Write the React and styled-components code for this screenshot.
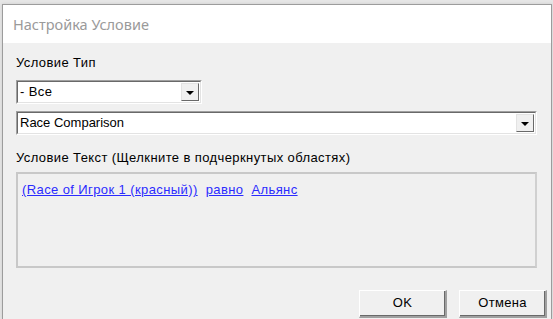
import React from "react";
import styled, { createGlobalStyle } from "styled-components";

const Global = createGlobalStyle`
  html, body { margin: 0; padding: 0; background: #e6e6e6; overflow: hidden; }
  body { width: 553px; height: 319px; font-family: "Liberation Sans", Arial, sans-serif; }
`;

const Page = styled.div`
  padding: 4px 1px 0 2px;
  height: 319px;
  box-sizing: border-box;
`;

const Window = styled.div`
  border: 1px solid #9c9c9c;
  border-bottom: none;
  height: 100%;
  box-sizing: border-box;
  display: flex;
  flex-direction: column;
  box-shadow: 0 0 3px rgba(0,0,0,0.12);
`;

const TitleBar = styled.div`
  height: 38px;
  background: #ffffff;
  display: flex;
  align-items: center;
  padding-left: 10px;
  font-family: "Noto Sans", "Open Sans", sans-serif;
  font-size: 14.5px;
  color: #9a9a9a;
`;

const Client = styled.div`
  flex: 1;
  background: #f0f0f0;
  padding: 12px 14px 0 13px;
  display: flex;
  flex-direction: column;
  font-size: 13px;
  color: #000;
`;

const Label = styled.div`
  height: 15px;
  line-height: 15px;
  letter-spacing: 0.4px;
  margin-bottom: ${(p) => p.$mb || 0}px;
`;

const Combo = styled.div`
  width: ${(p) => p.$w || "auto"};
  height: 24px;
  box-sizing: border-box;
  border-style: solid;
  border-width: 1px;
  border-color: #a0a0a0 #ffffff #ffffff #a0a0a0;
  margin-bottom: ${(p) => p.$mb || 0}px;
`;

const ComboInner = styled.div`
  height: 100%;
  box-sizing: border-box;
  border-style: solid;
  border-width: 1px;
  border-color: #696969 #e3e3e3 #e3e3e3 #696969;
  background: #fff;
  display: flex;
  align-items: center;
`;

const ComboText = styled.div`
  flex: 1;
  padding-left: 2px;
  line-height: 20px;
  white-space: nowrap;
  letter-spacing: ${(p) => p.$ls || 0}px;
`;

const DropButton = styled.div`
  width: 18px;
  height: 18px;
  margin-right: 1px;
  box-sizing: border-box;
  background: #f0f0f0;
  border-style: solid;
  border-width: 1px;
  border-color: #e3e3e3 #696969 #696969 #e3e3e3;
  display: flex;
  align-items: center;
  justify-content: center;
`;

const Triangle = styled.div`
  width: 0;
  height: 0;
  border-left: 4px solid transparent;
  border-right: 4px solid transparent;
  border-top: 4px solid #000;
  margin-top: 1px;
`;

const TextBox = styled.div`
  height: 96px;
  box-sizing: border-box;
  border-style: solid;
  border-width: 2px 2px 2px 2px;
  border-color: #c8c8c8 #d0d0d0 #c8c8c8 #c8c8c8;
  background: #f0f0f0;
  padding: 8px 0 0 4px;
  display: flex;
  gap: 8px;
  align-items: flex-start;
`;

const Link = styled.span`
  color: #2b2bff;
  text-decoration: underline;
  line-height: 15px;
  letter-spacing: 0.4px;
  white-space: nowrap;
`;

const ButtonRow = styled.div`
  display: flex;
  justify-content: flex-end;
  gap: 12px;
  margin-top: 22px;
  margin-right: -10px;
`;

const Button = styled.div`
  width: 88px;
  height: 28px;
  box-sizing: border-box;
  background: #f0f0f0;
  border-style: solid;
  border-width: 1px 2px 2px 1px;
  border-color: #ffffff #a0a0a0 #a0a0a0 #ffffff;
  box-shadow: inset -1px -1px 0 #696969;
  display: flex;
  align-items: center;
  justify-content: center;
  padding-bottom: 3px;
  letter-spacing: 0.3px;
`;

export default function App() {
  return (
    <>
      <Global />
      <Page>
        <Window>
          <TitleBar>Настройка Условие</TitleBar>
          <Client>
            <Label $mb={10}>Условие Тип</Label>
            <Combo $w="186px" $mb={7}>
              <ComboInner>
                <ComboText $ls={0.4}>- Все</ComboText>
                <DropButton><Triangle /></DropButton>
              </ComboInner>
            </Combo>
            <Combo $mb={15}>
              <ComboInner>
                <ComboText>Race Comparison</ComboText>
                <DropButton><Triangle /></DropButton>
              </ComboInner>
            </Combo>
            <Label $mb={7}>Условие Текст (Щелкните в подчеркнутых областях)</Label>
            <TextBox>
              <Link>(Race of Игрок 1 (красный))</Link>
              <Link>равно</Link>
              <Link>Альянс</Link>
            </TextBox>
            <ButtonRow>
              <Button>OK</Button>
              <Button>Отмена</Button>
            </ButtonRow>
          </Client>
        </Window>
      </Page>
    </>
  );
}
